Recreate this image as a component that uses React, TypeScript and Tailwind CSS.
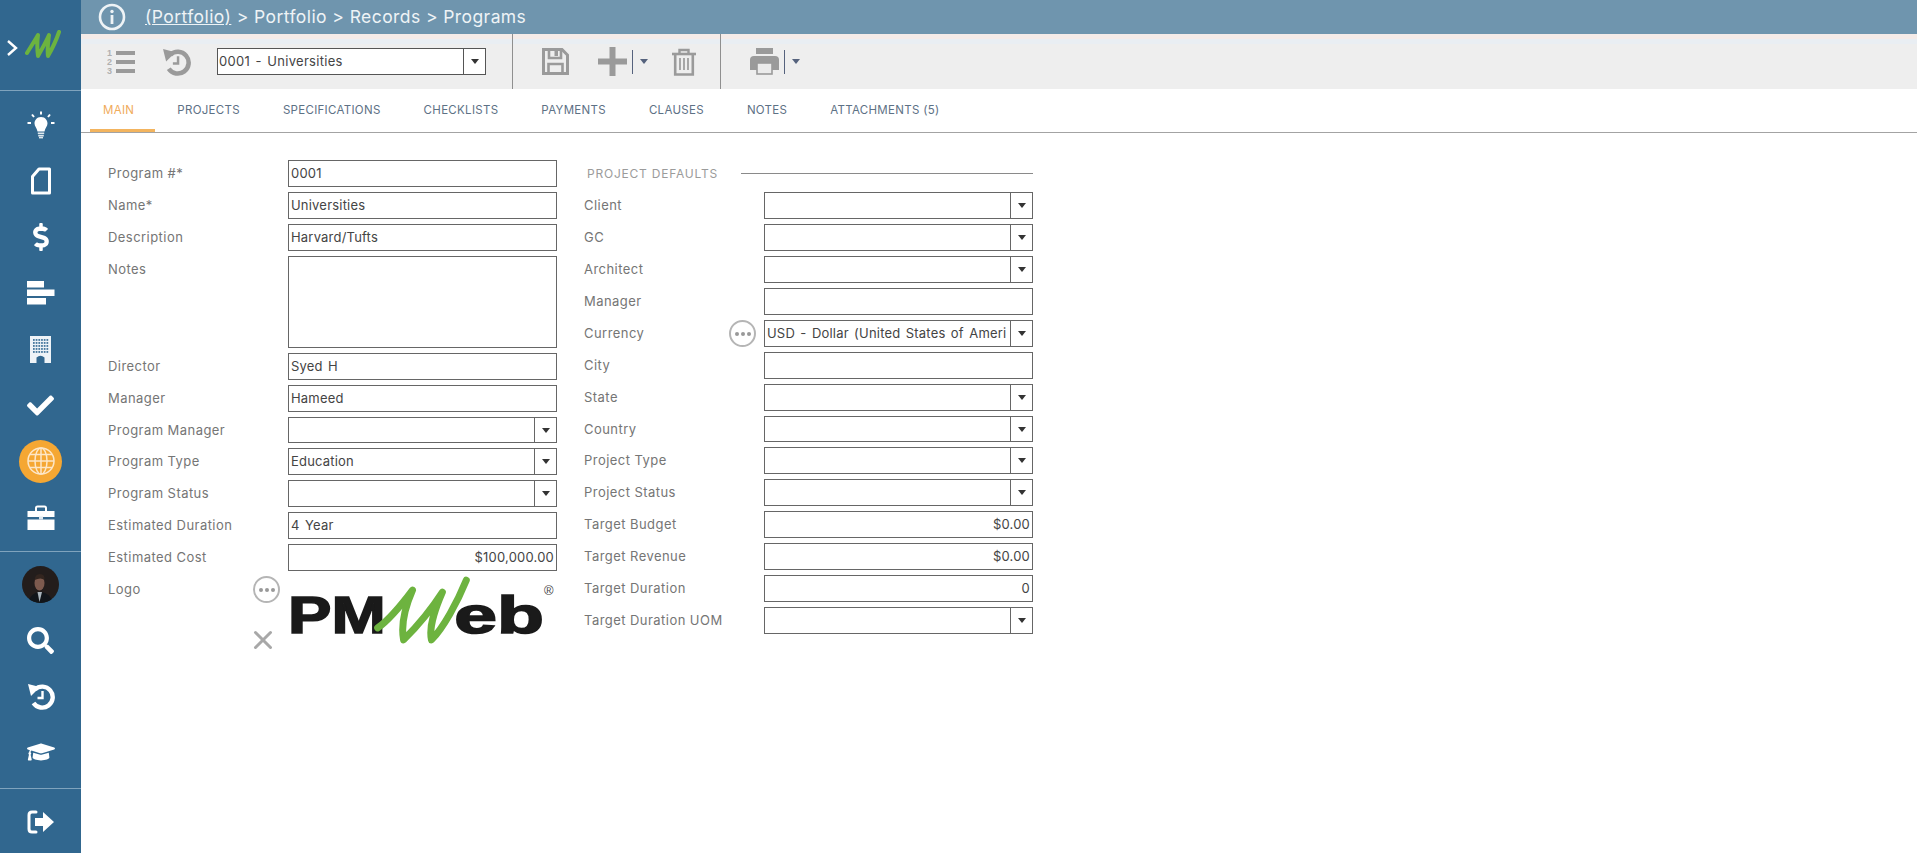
import React from "react";
import { FaDollarSign, FaCheck, FaSearch, FaGraduationCap } from "react-icons/fa";
import { X } from "lucide-react";

const font = { fontFamily: '"Inter", "Open Sans", sans-serif' };

function Caret({ color = "border-t-[#333]" }: { color?: string }) {
  return <span className={`block w-0 h-0 border-l-[4px] border-r-[4px] border-t-[5px] border-l-transparent border-r-transparent ${color}`} />;
}

function Dots() {
  return (
    <span className="flex items-center justify-center w-[27px] h-[27px] rounded-full border-2 border-[#b5b5b5] gap-[2px] bg-white">
      <span className="w-[4px] h-[4px] rounded-full bg-[#999]" />
      <span className="w-[4px] h-[4px] rounded-full bg-[#999]" />
      <span className="w-[4px] h-[4px] rounded-full bg-[#999]" />
    </span>
  );
}

type FieldProps = { value?: string; right?: boolean; select?: boolean; tall?: boolean; short?: boolean };

function Input({ value = "", right = false, select = false, tall = false, short = false }: FieldProps) {
  return (
    <div className={`flex w-[269px] border border-[#666] bg-white text-[13px] text-[#444] tracking-[0.2px] [word-spacing:1.5px] ${tall ? "h-[92px]" : short ? "h-[26px]" : "h-[27px]"}`}>
      <div className={`flex-1 min-w-0 overflow-hidden whitespace-nowrap px-[2px] leading-[25px] ${right ? "text-right" : ""}`}>{value}</div>
      {select && (
        <div className="w-[22px] shrink-0 border-l border-[#666] flex items-center justify-center">
          <Caret />
        </div>
      )}
    </div>
  );
}

function Field({ label, action, ...rest }: { label: string; action?: boolean } & FieldProps) {
  return (
    <div className={`flex mb-[5px] ${rest.tall ? "items-start" : "items-center"}`}>
      <div className={`w-[180px] shrink-0 flex items-center justify-between pr-[8px] text-[13px] text-[#757575] tracking-[0.45px] ${rest.tall ? "h-[27px]" : ""}`}>
        <span className="pt-[1px]">{label}</span>
        {action && <Dots />}
      </div>
      <Input {...rest} />
    </div>
  );
}

function NavItem({ children }: { children: React.ReactNode }) {
  return <div className="h-[56px] flex items-center justify-center text-white">{children}</div>;
}

function BulbIcon() {
  return (
    <svg width="28" height="28" viewBox="0 0 28 28" fill="none">
      <path d="M14 6 C9.5 6 7.5 9.5 7.5 12.5 C7.5 15.5 10 17 10.5 20.5 H17.5 C18 17 20.5 15.5 20.5 12.5 C20.5 9.5 18.5 6 14 6 Z" fill="#fff" />
      <path d="M10.8 22.3 H17.2 M11.2 24.6 H16.8" stroke="#dfe8ee" strokeWidth="1.6" />
      <path d="M12 26.6 H16" stroke="#dfe8ee" strokeWidth="1.6" />
      <path d="M14 0.5 V3.5 M5 3.5 L7 6 M23 3.5 L21 6 M0.5 12 H4 M24 12 H27.5" stroke="#fff" strokeWidth="2" />
    </svg>
  );
}

function DocIcon() {
  return (
    <svg width="22" height="28" viewBox="0 0 22 28" fill="none">
      <path d="M9 2 H19.5 V26 H2.5 V9.5 Z" stroke="#fff" strokeWidth="3" strokeLinejoin="round" />
    </svg>
  );
}

function BarsIcon() {
  return (
    <svg width="28" height="24" viewBox="0 0 28 24" fill="#fff">
      <rect x="0" y="0" width="17" height="6.5" />
      <rect x="0" y="8.5" width="27.5" height="6.5" />
      <rect x="0" y="17" width="19" height="6.5" />
    </svg>
  );
}

function BuildingIcon() {
  const dots: React.ReactNode[] = [];
  for (let r = 0; r < 5; r++) {
    for (let c = 0; c < 6; c++) {
      dots.push(<rect key={`${r}-${c}`} x={3 + c * 2.7} y={3 + r * 3} width="1.7" height="1.9" fill="#4a7ba0" />);
    }
  }
  return (
    <svg width="21" height="27" viewBox="0 0 21 27">
      <rect width="21" height="27" fill="#eef3f7" />
      {dots}
      <path d="M6.5 27 V21.5 Q10.5 18 14.5 21.5 V27 Z" fill="#31678f" />
    </svg>
  );
}

function GlobeIcon() {
  return (
    <svg width="30" height="30" viewBox="0 0 30 30" fill="none" stroke="#fde6c6" strokeWidth="1.5">
      <circle cx="15" cy="15" r="13" />
      <ellipse cx="15" cy="15" rx="6" ry="13" />
      <path d="M15 2 V28 M2 15 H28 M4 8.5 H26 M4 21.5 H26" />
    </svg>
  );
}

function BriefcaseIcon() {
  return (
    <svg width="28" height="25" viewBox="0 0 28 25" fill="none">
      <path d="M9 6 V3 Q9 1.5 10.5 1.5 H17.5 Q19 1.5 19 3 V6" stroke="#fff" strokeWidth="2" />
      <path d="M0.5 6 H27.5 V12 H0.5 Z M0.5 14.5 H27.5 V25 H0.5 Z" fill="#fff" />
      <rect x="12" y="11.5" width="4" height="3" fill="#dfe8ee" />
    </svg>
  );
}

function HistoryIcon({ color, size = 28 }: { color: string; size?: number }) {
  return (
    <svg width={size} height={size} viewBox="0 0 28 28" fill="none">
      <path d="M8 7.5 A10.5 10.5 0 1 1 6.5 21" stroke={color} strokeWidth="4.4" />
      <path d="M1 2 L13 5 L4 14 Z" fill={color} />
      <path d="M15.5 9 V16 H10.5" stroke={color} strokeWidth="2.4" />
    </svg>
  );
}

function SignOut() {
  return (
    <svg width="28" height="26" viewBox="0 0 28 26" fill="none">
      <path d="M9 3 H5 Q2 3 2 6 V20 Q2 23 5 23 H9" stroke="#fff" strokeWidth="3" strokeLinecap="round" />
      <path d="M8 9 H16 V3 L27 13 L16 23 V17 H8 Z" fill="#fff" />
    </svg>
  );
}

function Avatar() {
  return (
    <svg width="37" height="37" viewBox="0 0 37 37">
      <defs>
        <clipPath id="av"><circle cx="18.5" cy="18.5" r="18.5" /></clipPath>
      </defs>
      <g clipPath="url(#av)">
        <rect width="37" height="37" fill="#231d1c" />
        <path d="M6 37 Q8 27 18 26 Q29 27 31 37 Z" fill="#11151a" />
        <path d="M15.5 26 L17.5 36 L20 26 Z" fill="#aab4bb" />
        <ellipse cx="17.5" cy="17" rx="5" ry="7.5" fill="#7d5a4e" />
        <path d="M12.5 14 Q13 8 18 8 Q23 8 22.5 14 Q19 11 12.5 14 Z" fill="#33251f" />
      </g>
    </svg>
  );
}

function ListIcon() {
  return (
    <svg width="30" height="28" viewBox="0 0 30 28" fill="#9a9a9a">
      <rect x="11" y="3" width="19" height="4" />
      <rect x="11" y="12" width="19" height="4" />
      <rect x="11" y="21" width="19" height="4" />
      <text x="2" y="8" fontSize="9" fontFamily="Liberation Sans, sans-serif" fontWeight="700" fill="#b0b0b0">1</text>
      <text x="2" y="17" fontSize="9" fontFamily="Liberation Sans, sans-serif" fontWeight="700" fill="#b0b0b0">2</text>
      <text x="2" y="26" fontSize="9" fontFamily="Liberation Sans, sans-serif" fontWeight="700" fill="#b0b0b0">3</text>
    </svg>
  );
}

function SaveIcon() {
  return (
    <svg width="27" height="27" viewBox="0 0 27 27" fill="none" stroke="#9a9a9a">
      <path d="M1.5 1.5 H20 L25.5 7 V25.5 H1.5 Z" strokeWidth="3" />
      <path d="M7 1.5 V10 H19 V1.5" strokeWidth="2.6" />
      <rect x="12.5" y="3" width="3.5" height="5" fill="#9a9a9a" stroke="none" />
      <path d="M6.5 25 V16 H20.5 V25" strokeWidth="2.6" />
    </svg>
  );
}

function PlusIcon() {
  return (
    <svg width="29" height="29" viewBox="0 0 29 29" fill="#9a9a9a">
      <rect x="0" y="11.5" width="29" height="6" />
      <rect x="11.5" y="0" width="6" height="29" />
    </svg>
  );
}

function TrashIcon() {
  return (
    <svg width="24" height="28" viewBox="0 0 24 28" fill="none" stroke="#9a9a9a">
      <path d="M0 6 H24" strokeWidth="2.6" />
      <path d="M7.5 6 V2 H16.5 V6" strokeWidth="2.4" />
      <path d="M3.2 6 V26.5 H20.8 V6" strokeWidth="2.6" />
      <path d="M8 10 V22 M12 10 V22 M16 10 V22" strokeWidth="1.7" />
    </svg>
  );
}

function PrintIcon() {
  return (
    <svg width="29" height="27" viewBox="0 0 29 27">
      <rect x="6" y="0" width="17" height="6" fill="#9a9a9a" />
      <path d="M4 8 H25 Q29 8 29 12 V22 H0 V12 Q0 8 4 8 Z" fill="#9a9a9a" />
      <rect x="7" y="15" width="15" height="11" fill="#ebebeb" stroke="#9a9a9a" strokeWidth="1.6" />
    </svg>
  );
}

function BrandW() {
  return (
    <svg width="36" height="30" viewBox="0 0 36 30" fill="none">
      <path d="M2 23 C5 18 9 12 13 5 C12 13 12 19 13 26 C17 19 21 12 24 5 C23 13 22 19 23 26 C27 19 31 11 34 2" stroke="#6cb33f" strokeWidth="4" strokeLinecap="round" strokeLinejoin="round" />
    </svg>
  );
}

function Logo() {
  return (
    <svg width="270" height="72" viewBox="0 0 270 72">
      <text x="0" y="57" fontFamily="Liberation Sans, sans-serif" fontWeight="700" fontSize="52" fill="#1a1a1a" stroke="#1a1a1a" strokeWidth="1.6" textLength="98" lengthAdjust="spacingAndGlyphs">PM</text>
      <text x="167" y="57" fontFamily="Liberation Sans, sans-serif" fontWeight="700" fontSize="52" fill="#1a1a1a" stroke="#1a1a1a" strokeWidth="1.6" textLength="90" lengthAdjust="spacingAndGlyphs">eb</text>
      <path d="M90 52 C104 42 116 26 125 14 C118 30 113 48 116 64 C130 50 146 30 155 16 C148 32 141 50 144 64 C156 52 170 26 179 4" stroke="#6db33f" strokeWidth="7" strokeLinecap="round" strokeLinejoin="round" fill="none" />
      <text x="257" y="19" fontFamily="Liberation Sans, sans-serif" fontSize="13" fill="#444">®</text>
    </svg>
  );
}

const tabs = ["PROJECTS", "SPECIFICATIONS", "CHECKLISTS", "PAYMENTS", "CLAUSES", "NOTES", "ATTACHMENTS (5)"];

export default function App() {
  return (
    <div className="flex h-[853px] w-[1917px] overflow-hidden bg-white" style={font}>
      {/* Sidebar */}
      <aside className="w-[81px] shrink-0 bg-[#31678f] flex flex-col">
        <div className="h-[91px] shrink-0 border-b border-[#7fa3bd] flex items-center pl-[6px] gap-[7px]">
          <svg width="12" height="18" viewBox="0 0 12 18" fill="none" className="mt-[6px]"><path d="M2 2 L10 9 L2 16" stroke="#fff" strokeWidth="2.4" /></svg>
          <BrandW />
        </div>
        <div className="pt-[6px]">
          <NavItem><BulbIcon /></NavItem>
          <NavItem><DocIcon /></NavItem>
          <NavItem><FaDollarSign size={28} /></NavItem>
          <NavItem><BarsIcon /></NavItem>
          <NavItem><BuildingIcon /></NavItem>
          <NavItem><FaCheck size={27} /></NavItem>
          <NavItem>
            <span className="w-[43px] h-[43px] rounded-full bg-[#f5a733] flex items-center justify-center">
              <GlobeIcon />
            </span>
          </NavItem>
          <NavItem><BriefcaseIcon /></NavItem>
        </div>
        <div className="mt-[6px] border-t border-[#7fa3bd] pt-[4px]">
          <NavItem><Avatar /></NavItem>
          <NavItem><FaSearch size={27} /></NavItem>
          <NavItem><HistoryIcon color="#fff" /></NavItem>
          <NavItem><FaGraduationCap size={28} /></NavItem>
        </div>
        <div className="mt-[8px] border-t border-[#7fa3bd] pt-[5px]">
          <NavItem><SignOut /></NavItem>
        </div>
      </aside>

      <main className="flex-1 min-w-0 flex flex-col">
        {/* Header */}
        <header className="h-[34px] bg-[#6f95ae] flex items-center pl-[17px] text-[#eef3f6]">
          <svg width="28" height="28" viewBox="0 0 28 28" fill="none">
            <circle cx="14" cy="14" r="12" stroke="#eef3f6" strokeWidth="2.6" />
            <circle cx="14" cy="8.5" r="1.7" fill="#eef3f6" />
            <rect x="12.6" y="12" width="2.8" height="9" fill="#eef3f6" />
          </svg>
          <span className="ml-[19px] text-[17.5px] tracking-[0.42px] pt-[1px]"><span className="underline">(Portfolio)</span> &gt; Portfolio &gt; Records &gt; Programs</span>
        </header>

        {/* Toolbar */}
        <div className="h-[55px] bg-[linear-gradient(#f4ebe8_0,#f4ebe8_5px,#e9eef3_5px,#e9eef3_10px,#eeeeee_10px)] flex items-center pl-[24px]">
          <ListIcon />
          <span className="ml-[27px]"><HistoryIcon color="#9a9a9a" size={29} /></span>
          <div className="ml-[26px] w-[269px] h-[27px] border border-[#555] bg-white flex text-[13px] text-[#444] tracking-[0.3px] [word-spacing:1.5px]">
            <div className="flex-1 px-[1px] leading-[25px]">0001 - Universities</div>
            <div className="w-[22px] border-l border-[#555] flex items-center justify-center"><Caret /></div>
          </div>
          <div className="ml-[26px] h-[55px] border-l border-[#8f8f8f]" />
          <span className="ml-[29px]"><SaveIcon /></span>
          <span className="ml-[29px]"><PlusIcon /></span>
          <span className="ml-[5px] h-[24px] border-l border-[#55627d]" />
          <span className="ml-[7px]"><Caret color="border-t-[#55627d]" /></span>
          <span className="ml-[24px]"><TrashIcon /></span>
          <div className="ml-[24px] h-[55px] border-l border-[#8f8f8f]" />
          <span className="ml-[29px]"><PrintIcon /></span>
          <span className="ml-[5px] h-[24px] border-l border-[#55627d]" />
          <span className="ml-[7px]"><Caret color="border-t-[#55627d]" /></span>
        </div>

        {/* Tabs */}
        <nav className="h-[44px] shrink-0 border-b border-[#a3a3a3] flex items-stretch pl-[9px] gap-[43px] text-[11.5px] tracking-[0.3px] text-[#5d7185]">
          <div className="pl-[13px] pr-[21px] mr-[-21px] flex items-center text-[#f0ab5b] border-b-[3px] border-[#f3b45e] pt-[3px] h-[43px]">MAIN</div>
          {tabs.map((t) => (
            <div key={t} className="flex items-center h-[43px]">{t}</div>
          ))}
        </nav>

        {/* Form */}
        <section className="flex pt-[27px] pl-[27px] gap-[27px]">
          <div className="w-[449px]">
            <Field label="Program #*" value="0001" />
            <Field label="Name*" value="Universities" />
            <Field label="Description" value="Harvard/Tufts" />
            <Field label="Notes" tall />
            <Field label="Director" value="Syed H" />
            <Field label="Manager" value="Hameed" />
            <Field label="Program Manager" select short />
            <Field label="Program Type" value="Education" select />
            <Field label="Program Status" select />
            <Field label="Estimated Duration" value="4 Year" />
            <Field label="Estimated Cost" value="$100,000.00" right />
            <div className="flex">
              <div className="w-[180px] shrink-0 pr-[8px]">
                <div className="flex items-center justify-between text-[13px] text-[#757575] tracking-[0.45px]">
                  <span>Logo</span>
                  <Dots />
                </div>
                <div className="flex justify-end mt-[22px]">
                  <X size={30} strokeWidth={2.4} className="text-[#a8a8a8] mr-[2px]" />
                </div>
              </div>
              <Logo />
            </div>
          </div>

          <div className="w-[449px]">
            <div className="flex items-center h-[27px] mb-[5px] pl-[3px]">
              <span className="w-[154px] text-[12px] text-[#9b9b9b] tracking-[0.78px] whitespace-nowrap">PROJECT DEFAULTS</span>
              <span className="w-[292px] border-t border-[#8a8a8a]" />
            </div>
            <Field label="Client" select />
            <Field label="GC" select />
            <Field label="Architect" select />
            <Field label="Manager" />
            <Field label="Currency" value="USD - Dollar (United States of Ameri" select action />
            <Field label="City" />
            <Field label="State" select />
            <Field label="Country" select short />
            <Field label="Project Type" select />
            <Field label="Project Status" select />
            <Field label="Target Budget" value="$0.00" right />
            <Field label="Target Revenue" value="$0.00" right />
            <Field label="Target Duration" value="0" right />
            <Field label="Target Duration UOM" select />
          </div>
        </section>
      </main>
    </div>
  );
}
